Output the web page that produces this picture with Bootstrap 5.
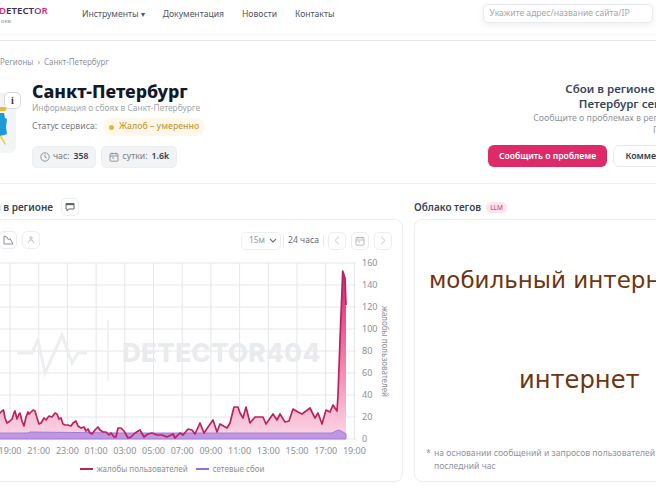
<!DOCTYPE html>
<html lang="ru">
<head>
  <meta charset="UTF-8" />
  <meta name="viewport" content="width=device-width, initial-scale=1.0"/>
  <title>Санкт-Петербург</title>
  <link rel="stylesheet" href="https://cdn.jsdelivr.net/npm/bootstrap@5.3.0/dist/css/bootstrap.min.css">
  <style>
    html, body { overflow: hidden; background: #fff; }
    body { font-family: "Noto Sans", sans-serif; color: #3b4350; width: 656px; height: 493px; }
    .page-wrap { width: 1100px; margin-left: -78px; }

    .top-bar { height: 41px; border-bottom: 1px solid #e6e8eb; padding-bottom: 7px; }
    .top-inner { height: 33px; padding-left: 78px; box-shadow: 0 2px 4px rgba(20,30,50,.03); }
    .logo-box { width: 83px; margin-left: -1px; line-height: 1; margin-top: -4px; }
    .logo-word { font-size: 9.7px; line-height: 12px; font-weight: 600; color: #37305c; white-space: nowrap; }
    .logo-word b { font-weight: 600; color: #e02c72; }
    .logo-word i { font-style: normal; color: #8a4a86; }
    .logo-sub { font-size: 6px; line-height: 8px; color: #9aa0a8; width: 12px; text-align: right; }
    .top-link { font-size: 8.6px; color: #4d5561; text-decoration: none; white-space: nowrap; }
    .nav-gap { gap: 18px; margin-top: -7px; padding-top: 3px; }
    .search-field { width: 170px; height: 19px; margin-left: 149px; margin-top: -7px; border: 1px solid #e8eaed; border-radius: 5px;
      font-size: 8.6px; color: #a3a8af; padding: 0 5px; line-height: 17px; box-shadow: 0 2px 6px rgba(20,30,50,.07); background: #fff; }

    .main-part { padding: 0 16px; }
    .crumbs { margin-top: 14px; height: 14px; line-height: 14px; font-size: 8px; color: #8f949c; }
    .crumbs span { margin-left: 4px; }
    .crumb-start { margin-left: 62px !important; }

    .hero-row { margin-top: 12px; height: 87px; }
    .hero-left { flex: 0 0 550px; }
    .coat-tile { width: 78px; height: 60px; margin-top: 12px; background: #f3f4f6; border-radius: 7px; position: relative; margin-right: 16px; flex: none; }
    .coat-tile svg { position: absolute; left: 62px; top: 13px; }
    .info-btn { position: absolute; left: 66px; top: -1px; width: 17px; height: 17px; background: #fff; border: 1px solid #d8dade; border-radius: 5px;
      font: 700 10px/15px "Liberation Serif", serif; color: #333; text-align: center; }
    .city-title { font-size: 17.8px; line-height: 21px; font-weight: 800; color: #101a2b; margin: 0; white-space: nowrap; }
    .city-sub { font-size: 8.4px; line-height: 12px; color: #a1a6ad; }
    .status-row { margin-top: 4px; height: 18px; font-size: 8.7px; color: #767c85; }
    .status-pill { margin-left: 6px; height: 18px; padding: 0 6px; background: #fff8ea; border-radius: 9px; color: #c49a3a; font-weight: 500; white-space: nowrap; }
    .status-dot { width: 5px; height: 5px; border-radius: 50%; background: #eeb32e; margin-right: 5px; }
    .stat-row { margin-top: 10px; gap: 5px; }
    .stat-chip { height: 22px; background: #f1f3f5; border-radius: 5px; font-size: 8.7px; color: #777d86; padding: 0 7px; border: 1px solid #eceef0; gap: 3px; }
    .stat-chip b { color: #333b47; font-weight: 600; margin-left: 1px; }

    .hero-right { flex: 0 0 368px; }
    .help-title { width: 140px; margin-left: 72px; font-size: 11.5px; line-height: 15px; font-weight: 600; color: #394658; text-align: center; white-space: nowrap; }
    .help-text { width: 310px; margin-left: 31px; margin-top: 1px; font-size: 8.8px; line-height: 12px; color: #8f949c; text-align: center; white-space: nowrap; }
    .action-row { gap: 6px; margin-top: 9px; }
    .report-btn { width: 119px; height: 22px; padding: 0; background: #df2a69; color: #fff; border: 0; border-radius: 6px; font-size: 8.6px; font-weight: 600; line-height: 22px; }
    .comment-btn { width: 102px; height: 22px; padding: 0; background: #fff; color: #333b47; border: 1px solid #e6e8eb; border-radius: 6px; font-size: 8.9px; font-weight: 600; line-height: 20px; }

    .split-line { border-top: 1px solid #eef0f2; margin-top: 15px; }
    .panels { padding: 0 16px; gap: 11px; }
    .chart-side { flex: 0 0 465px; }
    .cloud-side { flex: 0 0 500px; }
    .panel-head { margin-top: 14px; height: 18px; font-size: 10px; font-weight: 600; color: #3a4350; white-space: nowrap; }
    .head-start { width: 115px; text-align: right; }
    .tool-btn { width: 18px; height: 18px; border: 1px solid #eceef0; border-radius: 5px; background: #fff; flex: none; padding: 0; }
    .panel-box { margin-top: 3px; height: 263px; border: 1px solid #eceef0; border-radius: 8px; background: #fff; box-shadow: 0 1px 2px rgba(20,30,50,.02); }
    .tool-row { padding: 11px 10px 0 37px; height: 30px; }
    .tool-gap { gap: 5px; }
    .range-select { width: 40px; height: 18px; border: 1px solid #eceef0; border-radius: 5px; font-size: 8.4px; color: #8f949c; padding: 0 3px 0 7px; }
    .range-label { font-size: 8.6px; color: #666c75; border-left: 1px solid #e6e8eb; border-right: 1px solid #e6e8eb; height: 11px; line-height: 11px; width: 41px; text-align: center; margin: 0 -1px 0 -3px; white-space: nowrap; }
    .chart-svg { display: block; }
    .chart-svg text { font-family: "Noto Sans", sans-serif; font-size: 9px; fill: #8b9099; }
    .chart-svg .axis-name { font-size: 8px; }
    .chart-svg .wm-word { font-family: "Inter", sans-serif; font-size: 26px; font-weight: 800; fill: #e9ebee; letter-spacing: .3px; }
    .legend-row { height: 16px; font-size: 8px; color: #8b9099; gap: 8px; margin-top: 6px; padding-left: 3px; }
    .legend-mark { width: 13px; height: 2px; margin-right: 4px; }
    .llm-tag { margin-left: 5px; width: 21px; height: 11px; border-radius: 6px; background: #fde4ee; color: #d9477f; font-size: 6.5px; font-weight: 500; text-align: center; line-height: 11px; }
    .cloud-box { position: relative; }
    .cloud-word { position: absolute; font-family: "DejaVu Sans", sans-serif; line-height: 30px; color: #6d3511; white-space: nowrap; }
    .cloud-note { position: absolute; left: 11px; bottom: 8px; font-size: 8.6px; line-height: 13px; color: #8f949c; display: flex; white-space: nowrap; }
    .cloud-note span { width: 8px; }
  </style>
</head>
<body>
  <div class="page-wrap">
    <header class="top-bar">
      <div class="top-inner d-flex align-items-center">
        <div class="logo-box">
          <div class="logo-word"><b>D</b>ETECT<i>O</i><b>R</b></div>
          <div class="logo-sub">оев</div>
        </div>
        <nav class="d-flex nav-gap">
          <a class="top-link" href="#">Инструменты <small>▾</small></a>
          <a class="top-link" href="#">Документация</a>
          <a class="top-link" href="#">Новости</a>
          <a class="top-link" href="#">Контакты</a>
        </nav>
        <div class="search-field">Укажите адрес/название сайта/IP</div>
      </div>
    </header>

    <div class="main-part">
      <div class="crumbs"><span class="crumb-start">Регионы</span><span>›</span><span>Санкт-Петербург</span></div>
      <div class="hero-row d-flex">
        <div class="hero-left d-flex">
          <div class="coat-tile">
            <svg width="16" height="42" viewBox="0 0 16 42">
              <path d="M0 1h5l2 2-2 2H0z" fill="#e9b93a"/>
              <path d="M0 7h4l1 5 2 1-1 8 1 7-3 1-4 1z" fill="#1f9ad6"/>
              <path d="M0 31l5 8 1-1-5-9z" fill="#eccb4a"/>
            </svg>
            <div class="info-btn">i</div>
          </div>
          <div>
            <h1 class="city-title">Санкт-Петербург</h1>
            <div class="city-sub">Информация о сбоях в Санкт-Петербурге</div>
            <div class="status-row d-flex align-items-center">
              <span>Статус сервиса:</span>
              <span class="status-pill d-flex align-items-center"><span class="status-dot"></span>Жалоб – умеренно</span>
            </div>
            <div class="stat-row d-flex">
              <div class="stat-chip d-flex align-items-center">
                <svg width="10" height="10" viewBox="0 0 10 10" fill="none" stroke="#7a808a" stroke-width=".8"><circle cx="5" cy="5" r="4.2"/><path d="M5 2.6V5l1.7 1"/></svg>
                час: <b>358</b>
              </div>
              <div class="stat-chip d-flex align-items-center">
                <svg width="10" height="10" viewBox="0 0 10 10" fill="none" stroke="#7a808a" stroke-width=".8"><rect x="1" y="1.6" width="8" height="7.6" rx="1"/><path d="M1 4h8M3 .6v2M7 .6v2M3 6h2"/></svg>
                сутки: <b>1.6k</b>
              </div>
            </div>
          </div>
        </div>
        <div class="hero-right">
          <div class="help-title">Сбои в регионе Санкт-<br>Петербург сейчас</div>
          <div class="help-text">Сообщите о проблемах в регионе Санкт-Петербург, если они есть<br>Помогите</div>
          <div class="action-row d-flex">
            <button class="btn report-btn">Сообщить о проблеме</button>
            <button class="btn comment-btn">Комментировать</button>
          </div>
        </div>
      </div>
    </div>
    <div class="split-line"></div>

    <div class="panels d-flex">
      <section class="chart-side">
        <div class="panel-head d-flex align-items-center">
          <span class="head-start">Ситуация в регионе</span>
          <button class="tool-btn ms-2 d-flex align-items-center justify-content-center">
            <svg width="10" height="10" viewBox="0 0 10 10" fill="none" stroke="#5f6670" stroke-width="1"><path d="M1 1.5h8v5.5H3.5L2 8.8V7H1z"/><path d="M1 2.5h8" stroke-width="1.4"/></svg>
          </button>
        </div>
        <div class="panel-box">
          <div class="tool-row d-flex justify-content-between">
            <div class="d-flex tool-gap">
              <button class="tool-btn"></button>
              <button class="tool-btn d-flex align-items-center justify-content-center">
                <svg width="11" height="10" viewBox="0 0 11 10" fill="none" stroke="#7d838c" stroke-width=".9"><path d="M1 1v8h9L7 3.5 5.5 5 3.8 2z"/></svg>
              </button>
              <button class="tool-btn d-flex align-items-center justify-content-center">
                <svg width="8" height="8" viewBox="0 0 8 8" fill="none" stroke="#b4b8bf" stroke-width=".9"><circle cx="4" cy="2" r="1.2"/><path d="M1 7l2-3h2l2 3"/></svg>
              </button>
            </div>
            <div class="d-flex align-items-center tool-gap">
              <div class="range-select d-flex align-items-center justify-content-between">
                <span>15м</span>
                <svg width="8" height="6" viewBox="0 0 8 6" fill="none" stroke="#6f757e" stroke-width="1.1"><path d="M1 1l3 3 3-3"/></svg>
              </div>
              <div class="range-label">24 часа</div>
              <button class="tool-btn d-flex align-items-center justify-content-center">
                <svg width="6" height="9" viewBox="0 0 6 9" fill="none" stroke="#bfc3c9" stroke-width=".9"><path d="M5 .8L1 4.5 5 8.2"/></svg>
              </button>
              <button class="tool-btn d-flex align-items-center justify-content-center">
                <svg width="10" height="10" viewBox="0 0 10 10" fill="none" stroke="#a5a9b0" stroke-width=".8"><rect x="1" y="1.6" width="8" height="7.6" rx="1"/><path d="M1 4h8M3 .6v2M7 .6v2M3 6h2"/></svg>
              </button>
              <button class="tool-btn d-flex align-items-center justify-content-center">
                <svg width="6" height="9" viewBox="0 0 6 9" fill="none" stroke="#bfc3c9" stroke-width=".9"><path d="M1 .8L5 4.5 1 8.2"/></svg>
              </button>
            </div>
          </div>
          <svg class="chart-svg" id="chart" width="463" height="205" viewBox="-61 250 463 205">
            <defs>
              <linearGradient id="pinkFill" gradientUnits="userSpaceOnUse" x1="0" y1="270" x2="0" y2="439">
                <stop offset="0" stop-color="#df1f66"/>
                <stop offset=".5" stop-color="#ef7aa6"/>
                <stop offset="1" stop-color="#fbd9e6"/>
              </linearGradient>
            </defs>
            <g id="gridLayer"></g>
            <g>
              <path d="M17 353h15l6-13 7 33 17-38 10 28 6-10h9" fill="none" stroke="#eceef0" stroke-width="3"/>
              <path d="M108 320v61" stroke="#eceef0" stroke-width="1.5"/>
              <text class="wm-word" x="122" y="362">DETECTOR404</text>
            </g>
            <path id="pinkArea" fill="url(#pinkFill)"/>
            <path id="purpleArea" fill="#bd98e0" stroke="#a878d8" stroke-width="1"/>
            <path id="pinkLine" fill="none" stroke="#bb2260" stroke-width="1.7" stroke-linejoin="round"/>
            <text class="axis-name" transform="translate(382 306) rotate(90)">жалобы пользователей</text>
          </svg>
          <div class="legend-row d-flex justify-content-center align-items-center">
            <span class="d-flex align-items-center"><span class="legend-mark" style="background:#bb2260"></span>жалобы пользователей</span>
            <span class="d-flex align-items-center"><span class="legend-mark" style="background:#8f6fd0"></span>сетевые сбои</span>
          </div>
        </div>
      </section>

      <section class="cloud-side">
        <div class="panel-head d-flex align-items-center">
          <span>Облако тегов</span><span class="llm-tag">LLM</span>
        </div>
        <div class="panel-box cloud-box">
          <div class="cloud-word" style="left:14px;top:45px;font-size:23px">мобильный интернет</div>
          <div class="cloud-word" style="left:104px;top:145px;font-size:24.2px">интернет</div>
          <div class="cloud-note"><span>*</span><div>на основании сообщений и запросов пользователей за<br>последний час</div></div>
        </div>
      </section>
    </div>
  </div>

  <script>
    const pts = [[-61,420],[-50,414],[-40,422],[-30,412],[-20,418],[-10,416],[0,413],[2,411],[3.5,410],[5,418],[7,423],[10,421],[12,419],[14,413],[15,411],[17,419],[19,414],[20,413],[22,421],[24,426],[26,417],[28,412],[29,414],[31,412],[33,410],[35,411],[37,418],[39,424],[41,423],[44,418],[46,420],[49,416],[52,417],[55,413],[57,414],[59,419],[61,418],[63,424],[65,425],[68,425],[71,426],[73,423],[76,421],[78,426],[81,428],[84,427],[86,431],[88,429],[90,433],[92,434],[95,430],[98,427],[100,430],[103,432],[106,432],[109,435],[111,433],[114,437],[116,437],[118,428],[121,428],[124,431],[128,438],[131,437],[135,433],[140,430],[144,437],[148,434],[152,433],[157,435],[162,435],[167,437],[173,434],[175,438],[180,433],[183,435],[188,429],[192,430],[195,434],[200,423],[204,433],[208,427],[213,420],[217,432],[220,424],[227,428],[230,423],[234,407],[238,407],[240,413],[243,418],[246,407],[250,423],[255,417],[263,417],[266,424],[273,414],[277,420],[280,414],[285,422],[289,421],[293,409],[298,412],[302,414],[310,408],[315,418],[318,413],[322,424],[326,410],[330,412],[333,405],[337,411],[338,395],[340,340],[342,290],[342.7,271],[345,278],[346,305]];
    const net = [[-61,433],[28,433],[30,432],[120,433],[200,433],[300,433],[332,433],[336,431],[339,430],[343,432],[346,434]];
    const toD = list => list.map((p, i) => (i ? "L" : "M") + p[0] + " " + p[1]).join("");

    document.getElementById("pinkLine").setAttribute("d", toD(pts));
    document.getElementById("pinkArea").setAttribute("d", toD(pts) + "L346 439L-61 439Z");
    document.getElementById("purpleArea").setAttribute("d", toD(net) + "L346 439L-61 439Z");

    // grid and axis labels
    let grid = "";
    [160,140,120,100,80,60,40,20,0].forEach((v, i) => {
      const y = 263 + i * 22;
      grid += `<path d="M-61 ${y}H356" stroke="#e4e6ea" stroke-width="1"/><text x="362" y="${y + 3}">${v}</text>`;
    });
    ["17:00","19:00","21:00","23:00","01:00","03:00","05:00","07:00","09:00","11:00","13:00","15:00","17:00","19:00"].forEach((t, i) => {
      const x = -18.7 + i * 28.7;
      grid += `<path d="M${x} 263V439" stroke="#e4e6ea" stroke-width="1"/><text x="${x}" y="453.5" text-anchor="middle">${t}</text>`;
    });
    document.getElementById("gridLayer").innerHTML = grid;
  </script>
  <script src="https://cdn.jsdelivr.net/npm/bootstrap@5.3.0/dist/js/bootstrap.bundle.min.js"></script>
</body>
</html>
